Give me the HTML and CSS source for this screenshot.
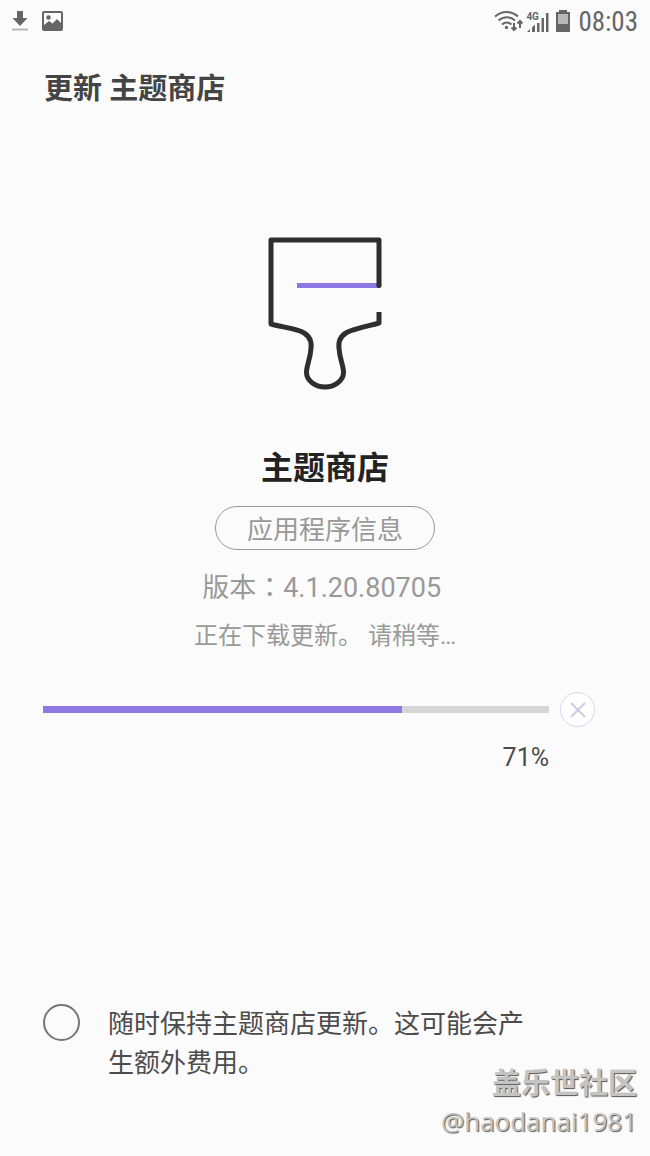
FILE: index.html
```html
<!DOCTYPE html>
<html lang="zh-CN">

<head>
    <meta charset="UTF-8">
    <meta name="viewport" content="width=device-width, initial-scale=1.0">
    <title>更新 主题商店</title>
    <link rel="stylesheet" href="styles.css">
</head>

<body>
    <div class="statusbar">
        <svg class="icon-download" width="16" height="22" viewBox="0 0 16 22">
            <path d="M5 0h6v7h4.500L8 15 .5 7H5z" fill="#666"/>
            <path d="M0 18.500h16" stroke="#b5b5b5" stroke-width="2"/>
        </svg>
        <svg class="icon-picture" width="22" height="22" viewBox="0 0 22 22">
            <rect x="1" y="1" width="19" height="18" rx="1" fill="#fcfcfc" stroke="#666" stroke-width="2"/>
            <circle cx="6.500" cy="6.500" r="2.200" fill="#666"/>
            <path d="M2 14l5-4 3.500 2.500L15 8l5 5v6H2z" fill="#666"/>
        </svg>
        <svg class="icon-wifi" width="30" height="24" viewBox="0 0 30 24">
            <g fill="none" stroke="#666" stroke-width="2">
                <path d="M1 6.500C8 .5 17 .5 24 6.500"/>
                <path d="M4.500 10.500c5-4.500 11.500-4.500 16.500 0"/>
                <path d="M8 14.500c3-2.600 6.500-2.600 9.500 0"/>
                <path d="M20 13v7M17.500 17.500l2.500 2.500 2.500-2.500"/>
                <path d="M26 18v-7M23.500 13.500l2.500-2.500 2.500 2.500"/>
            </g>
            <circle cx="12.500" cy="17.500" r="1.700" fill="#666"/>
        </svg>
        <div class="signal">
            <span>4G</span>
            <svg width="22" height="22" viewBox="0 0 22 22">
                <path d="M0 21l3-3v3zM5 16.500l3-3V21H5zM10 12h2.500v9H10zM14.500 7H17v14h-2.500zM19 2h2.500v19H19z" fill="#666"/>
            </svg>
        </div>
        <svg class="icon-battery" width="16" height="24" viewBox="0 0 16 24">
            <path d="M4 0h8v2h3v20H1V2h3z" fill="#666"/>
            <path d="M3 4h10v10H3z" fill="#b8b8b8"/>
        </svg>
        <span class="clock">08:03</span>
    </div>

    <h1>更新 主题商店</h1>

    <main>
        <svg class="brush" width="116" height="156" viewBox="0 0 116 156">
            <path d="M30 49.500h82" stroke="#9078e4" stroke-width="5"/>
            <path d="M112 49.500V4H4v84c11 3 20 4 29 7 8 3 12 8 11 17-.5 11-4.500 17-4.500 24.500C39.500 145 49 151 58 151s18.500-6 18.500-14.500C76.500 129 72.500 123 72 112c-1-9 3-14 11-17 9-3 18-5 29-8V76" fill="none" stroke="#2e2e2e" stroke-width="5" stroke-linejoin="round"/>
            <circle cx="112" cy="49.500" r="2.500" fill="#2e2e2e"/>
        </svg>
        <h2>主题商店</h2>
        <button class="info">应用程序信息</button>
        <p class="version" lang="zh-TW">版本：4.1.20.80705&nbsp;</p>
        <p class="status">正在下载更新。 请稍等…</p>
    </main>

    <div class="download">
        <progress id="bar" value="71" max="100" aria-label="下载进度"></progress>
        <button class="cancel" aria-label="取消">
            <svg width="16" height="16" viewBox="0 0 16 16">
                <path d="M1 1l14 14M15 1L1 15" stroke="#cfcbe4" stroke-width="2"/>
            </svg>
        </button>
    </div>
    <p class="percent">71%</p>

    <div class="keep">
        <input type="checkbox" id="auto">
        <label for="auto">随时保持主题商店更新。这可能会产生额外费用。</label>
    </div>

    <div class="watermark">
        <div class="site">盖乐世社区</div>
        <div class="user">@haodanai1981</div>
    </div>
</body>

</html>
```

FILE: styles.css
```css
* {
    box-sizing: border-box;
}

body {
    margin: 0;
    min-height: 100vh;
    position: relative;
    display: flex;
    flex-direction: column;
    background-color: #fbfbfb;
    color: #4c4c4c;
    font-family: Roboto, "Noto Sans CJK SC", sans-serif;
}

h1,
h2,
p {
    margin: 0;
}

button {
    font-family: inherit;
    cursor: pointer;
}

.statusbar {
    display: flex;
    align-items: center;
    height: 44px;
    padding: 0 12px;
}

.icon-picture {
    margin-left: 14px;
}

.icon-wifi {
    margin-left: auto;
}

.signal {
    position: relative;
    display: flex;
    margin-left: 3px;
}

.signal span {
    position: absolute;
    left: -1px;
    top: 1px;
    font-size: 10px;
    font-weight: bold;
    line-height: 10px;
    color: #666;
}

.icon-battery {
    margin: 0 7px 0 6px;
}

.clock {
    font-family: "Roboto Condensed", "Liberation Sans Narrow", Roboto, sans-serif;
    font-size: 27px;
    line-height: 32px;
    color: #666;
}

h1 {
    padding: 25px 44px 23px;
    font-size: 29px;
    line-height: 40px;
    font-weight: bold;
    color: #444;
}

main {
    display: flex;
    flex-direction: column;
    align-items: center;
    padding-top: 104px;
}

h2 {
    margin-top: 52px;
    font-size: 32px;
    line-height: 48px;
    font-weight: bold;
    color: #222;
}

.info {
    height: 44px;
    margin-top: 14px;
    padding: 3px 31px 0;
    border: 1px solid #999;
    border-radius: 22px;
    background: none;
    font-size: 26px;
    line-height: 40px;
    color: #999;
}

.version {
    margin-top: 18px;
    font-family: Roboto, "Noto Sans CJK TC", sans-serif;
    font-size: 27px;
    line-height: 40px;
    color: #999;
}

.status {
    margin-top: 8px;
    font-size: 24px;
    line-height: 40px;
    color: #999;
}

.download {
    display: flex;
    align-items: center;
    gap: 11px;
    margin-top: 36px;
    padding: 0 55px 0 43px;
}

progress {
    flex: 1;
    height: 7px;
    border: none;
    appearance: none;
    -webkit-appearance: none;
}

progress::-webkit-progress-bar {
    background-color: #d6d6d6;
}

progress::-webkit-progress-value {
    background-color: #9078e4;
}

.cancel {
    display: flex;
    align-items: center;
    justify-content: center;
    width: 35px;
    height: 35px;
    padding: 0;
    border: 1px solid #d9d6ec;
    border-radius: 50%;
    background-color: #fff;
}

.percent {
    margin-top: 11px;
    padding-right: 101px;
    font-size: 25px;
    line-height: 40px;
    text-align: right;
}

.keep {
    display: flex;
    align-items: flex-start;
    gap: 28px;
    margin-top: auto;
    padding: 0 101px 73px 43px;
}

.keep input {
    flex: none;
    appearance: none;
    -webkit-appearance: none;
    width: 37px;
    height: 37px;
    margin: 0;
    border: 2px solid #777;
    border-radius: 50%;
}

.keep input:checked {
    background-color: #9078e4;
}

.keep label {
    padding-top: 1px;
    font-size: 26px;
    line-height: 39px;
}

.watermark {
    position: absolute;
    right: 13px;
    bottom: 17px;
    text-align: right;
    color: #c4c4c4;
    text-shadow: 1px 1px 1px #555;
}

.site {
    font-size: 29px;
    line-height: 38px;
    font-weight: bold;
}

.user {
    font-family: "Open Sans", sans-serif;
    font-size: 26px;
    line-height: 36px;
}
```
